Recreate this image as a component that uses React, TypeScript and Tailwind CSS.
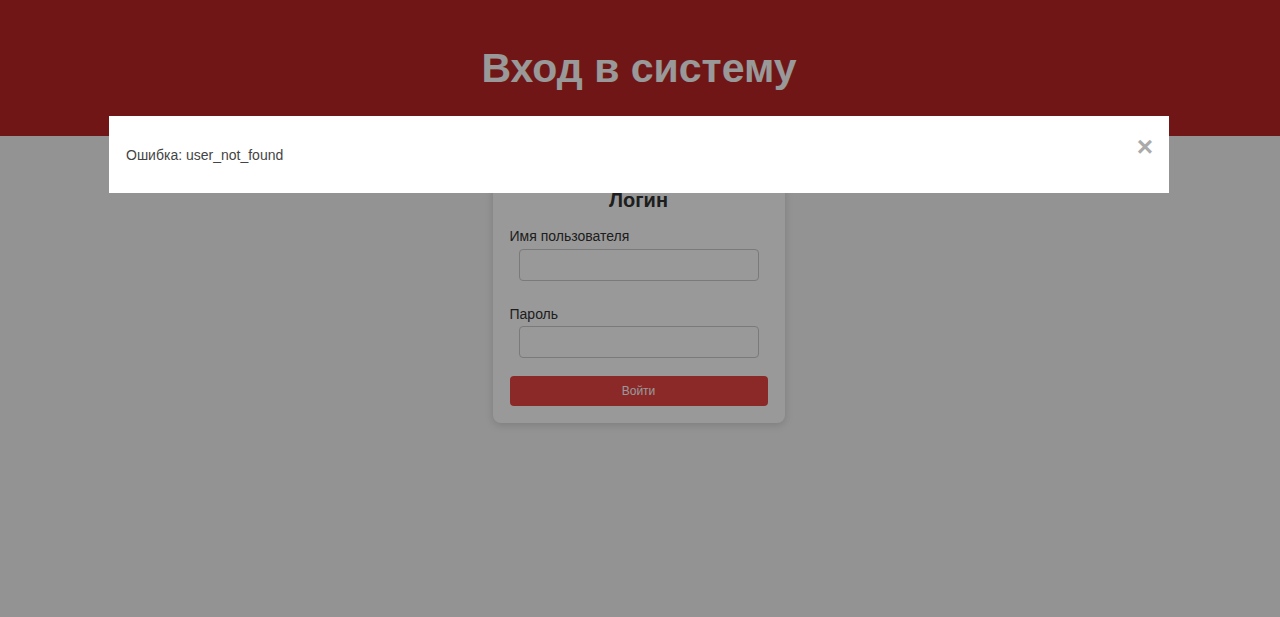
import React from 'react';

const App = () => {
  return (
    <div className="relative min-h-[617px] bg-[#f5f5f5] font-['Liberation_Sans',Arial,sans-serif]">
      {/* Header */}
      <header className="h-[136px] bg-[#bb2626] flex items-center justify-center">
        <h1 className="text-[41px] font-bold text-white leading-none -translate-x-[1px]">Вход в систему</h1>
      </header>

      {/* Login card */}
      <div className="flex justify-center pt-[34px] pr-[3px]">
        <div className="w-[292px] bg-white rounded-lg shadow-[0_2px_8px_rgba(0,0,0,0.15)] px-[17px] pt-[20px] pb-[17px]">
          <h2 className="text-center text-[20px] font-bold text-[#333] leading-none">Логин</h2>
          <form className="mt-[19px]" onSubmit={(e) => e.preventDefault()}>
            <label className="block text-[14px] text-[#333] leading-none">Имя пользователя</label>
            <input
              type="text"
              className="block ml-[9px] mt-[6px] w-[240px] h-[32px] border border-[#ccc] rounded bg-white"
            />
            <label className="block text-[14px] text-[#333] leading-none mt-[26px]">Пароль</label>
            <input
              type="password"
              className="block ml-[9px] mt-[5px] w-[240px] h-[32px] border border-[#ccc] rounded bg-white"
            />
            <button
              type="submit"
              className="mt-[18px] w-full h-[30px] rounded bg-[#e84343] text-white text-[12px]"
            >
              Войти
            </button>
          </form>
        </div>
      </div>

      {/* Error modal */}
      <div className="absolute inset-0 bg-black/40">
        <div className="mx-auto mt-[116px] w-[1060px] h-[77px] bg-white flex items-start justify-between pl-[17px] pr-[16px] -translate-x-[1px]">
          <p className="text-[14px] text-[#444] mt-[29px]">Ошибка: user_not_found</p>
          <button className="text-[28px] font-bold text-[#aaa] leading-none mt-[17px]">×</button>
        </div>
      </div>
    </div>
  );
};

export default App;
